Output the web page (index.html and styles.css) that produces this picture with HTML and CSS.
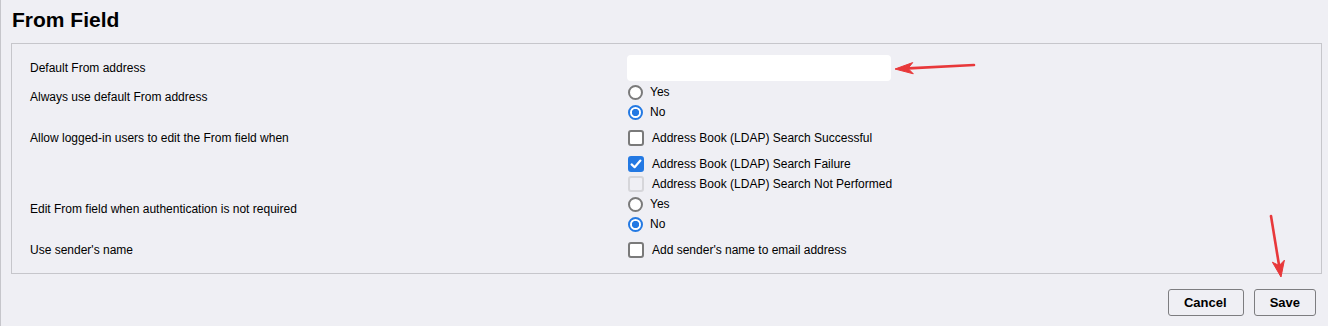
FILE: index.html
```html
<!DOCTYPE html>
<html lang="en">
<head>
    <meta charset="UTF-8">
    <meta name="viewport" content="width=device-width, initial-scale=1.0">
    <title>From Field</title>
    <link rel="stylesheet" href="styles.css">
</head>

<body>
    <h1 class="page-title">From Field</h1>

    <div class="panel">
        <div class="field field-text">
            <label class="field-label" for="from-address">Default From address</label>
            <div class="field-control">
                <input type="text" id="from-address" class="text-input">
            </div>
        </div>

        <div class="field field-radio">
            <span class="field-label">Always use default From address</span>
            <div class="field-control">
                <label class="option"><span class="radio"></span>Yes</label>
                <label class="option"><span class="radio radio-on"></span>No</label>
            </div>
        </div>

        <div class="field field-check">
            <span class="field-label">Allow logged-in users to edit the From field when</span>
            <div class="field-control">
                <label class="option option-spaced"><span class="checkbox"></span>Address Book (LDAP) Search Successful</label>
                <label class="option">
                    <span class="checkbox checkbox-on">
                        <svg width="16" height="16" viewBox="0 0 16 16"><path d="M3.6 8.4 L6.6 11.2 L12.4 4.6" fill="none" stroke="#fff" stroke-width="2.2" stroke-linecap="round" stroke-linejoin="round"/></svg>
                    </span>Address Book (LDAP) Search Failure
                </label>
                <label class="option"><span class="checkbox checkbox-disabled"></span>Address Book (LDAP) Search Not Performed</label>
            </div>
        </div>

        <div class="field field-radio">
            <span class="field-label">Edit From field when authentication is not required</span>
            <div class="field-control">
                <label class="option"><span class="radio"></span>Yes</label>
                <label class="option"><span class="radio radio-on"></span>No</label>
            </div>
        </div>

        <div class="field field-check">
            <span class="field-label">Use sender's name</span>
            <div class="field-control">
                <label class="option"><span class="checkbox"></span>Add sender's name to email address</label>
            </div>
        </div>
    </div>

    <div class="actions">
        <button class="btn">Cancel</button>
        <button class="btn">Save</button>
    </div>

    <!-- annotation arrows -->
    <svg class="annotations" width="1328" height="326" viewBox="0 0 1328 326">
        <g fill="#e8383a" stroke="#e8383a">
            <line x1="974" y1="65" x2="908" y2="68.4" stroke-width="2.6" stroke-linecap="round"/>
            <polygon points="895,69 912.7,62.6 908,68.4 913.3,73.8" stroke-width="1" stroke-linejoin="round"/>
            <line x1="1271" y1="216" x2="1279" y2="265" stroke-width="2.6" stroke-linecap="round"/>
            <polygon points="1281,277 1272.4,262.2 1279.2,265.6 1284.4,260.2" stroke-width="1" stroke-linejoin="round"/>
        </g>
    </svg>
</body>
</html>
```

FILE: styles.css
```css
* {
    margin: 0;
    padding: 0;
    box-sizing: border-box;
}

body {
    background: #efeff4;
    border-left: 1px solid #c6c6cb;
    min-height: 326px;
    font-family: "Liberation Sans", Arial, sans-serif;
    font-size: 12px;
    color: #000;
    position: relative;
    overflow: hidden;
}

.page-title {
    font-size: 21px;
    line-height: 24px;
    font-weight: bold;
    padding: 8px 0 0 11px;
}

/* Panel */
.panel {
    margin: 11px 6px 0 10px;
    border: 1px solid #c6c6cb;
    padding: 11px 18px 13px;
}

.field {
    display: grid;
    grid-template-columns: 597px 1fr;
    align-items: start;
}

.field-label {
    line-height: 20px;
}

.field-text {
    align-items: center;
    padding-bottom: 1px;
}

.field-radio .field-label {
    padding-top: 5px;
}

.field-check {
    margin-top: 6px;
}

.field-control {
    display: flex;
    flex-direction: column;
}

.text-input {
    width: 264px;
    height: 26px;
    border: none;
    border-radius: 4px;
    background: #fff;
    outline: none;
}

.option {
    display: flex;
    align-items: center;
    height: 20px;
    line-height: 20px;
}

.option-spaced {
    margin-bottom: 6px;
}

.radio {
    width: 15px;
    height: 15px;
    margin: 0 7px 0 1px;
    border: 2px solid #7a7a7a;
    border-radius: 50%;
    background: #fff;
}

.radio-on {
    border-color: #2379e3;
    background: radial-gradient(circle, #2379e3 0 3.4px, #fff 3.9px);
}

.checkbox {
    width: 16px;
    height: 16px;
    margin: 0 8px 0 1px;
    border: 2px solid #7a7a7a;
    border-radius: 3px;
    background: #fff;
    position: relative;
}

.checkbox svg {
    position: absolute;
    top: -2px;
    left: -2px;
}

.checkbox-on {
    border-color: #2379e3;
    background: #2379e3;
}

.checkbox-disabled {
    border-color: #d6d6da;
    background: transparent;
}

/* Buttons */
.actions {
    display: flex;
    justify-content: flex-end;
    gap: 10px;
    margin: 15px 12px 0 0;
}

.btn {
    height: 27px;
    padding: 0 15px;
    border: 1px solid #7d7d80;
    border-radius: 3px;
    background: #efeff4;
    font-family: "Liberation Sans", Arial, sans-serif;
    font-size: 13px;
    font-weight: bold;
    color: #000;
}

.btn:first-child {
    padding: 0 16px 0 15px;
}

.annotations {
    position: absolute;
    top: 0;
    left: -1px;
    pointer-events: none;
}
```
